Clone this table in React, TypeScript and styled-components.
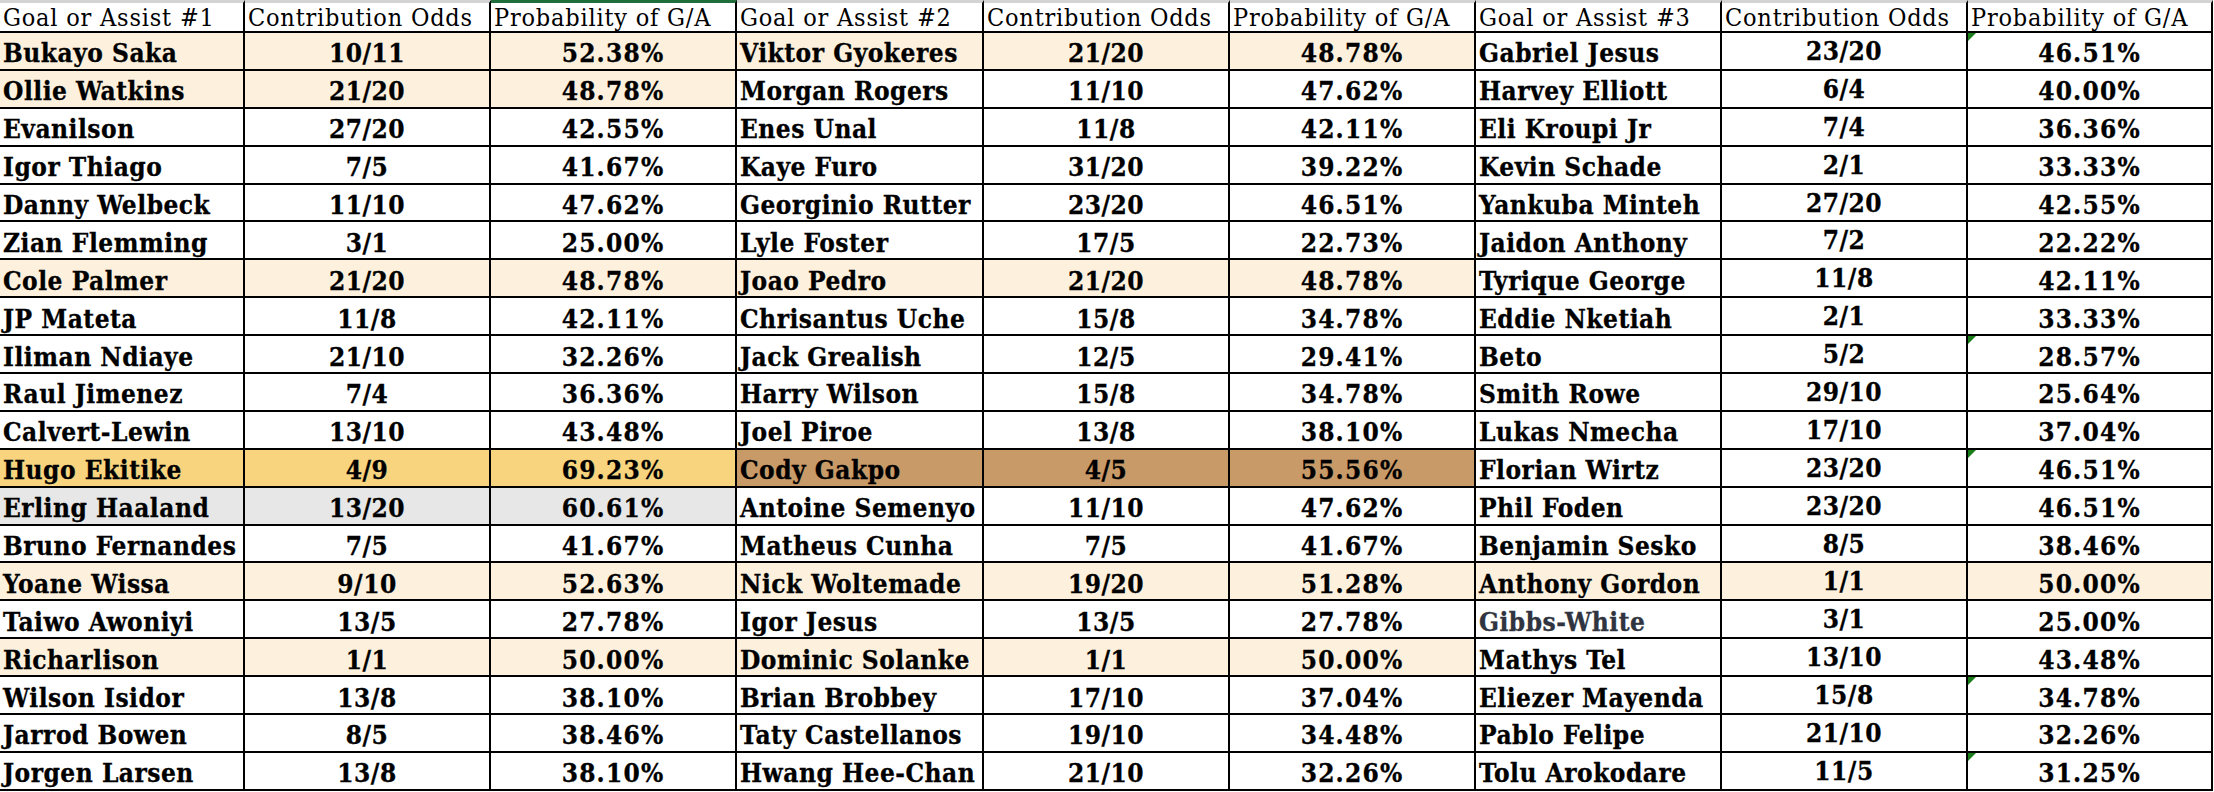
import React from 'react';
import styled, { createGlobalStyle } from 'styled-components';

type Tone = 'cream' | 'gold' | 'brown' | 'grey';

interface Entry {
    name: string
    odds: string
    prob: string
    tone?: Tone
    marker?: boolean
    muted?: boolean
}

const e = (name: string, odds: string, prob: string, extra: Partial<Entry> = {}): Entry =>
    ({ name, odds, prob, ...extra })

const groupOne: Entry[] = [
    e('Bukayo Saka', '10/11', '52.38%', { tone: 'cream' }),
    e('Ollie Watkins', '21/20', '48.78%', { tone: 'cream' }),
    e('Evanilson', '27/20', '42.55%'),
    e('Igor Thiago', '7/5', '41.67%'),
    e('Danny Welbeck', '11/10', '47.62%'),
    e('Zian Flemming', '3/1', '25.00%'),
    e('Cole Palmer', '21/20', '48.78%', { tone: 'cream' }),
    e('JP Mateta', '11/8', '42.11%'),
    e('Iliman Ndiaye', '21/10', '32.26%'),
    e('Raul Jimenez', '7/4', '36.36%'),
    e('Calvert-Lewin', '13/10', '43.48%'),
    e('Hugo Ekitike', '4/9', '69.23%', { tone: 'gold' }),
    e('Erling Haaland', '13/20', '60.61%', { tone: 'grey' }),
    e('Bruno Fernandes', '7/5', '41.67%'),
    e('Yoane Wissa', '9/10', '52.63%', { tone: 'cream' }),
    e('Taiwo Awoniyi', '13/5', '27.78%'),
    e('Richarlison', '1/1', '50.00%', { tone: 'cream' }),
    e('Wilson Isidor', '13/8', '38.10%'),
    e('Jarrod Bowen', '8/5', '38.46%'),
    e('Jorgen Larsen', '13/8', '38.10%'),
]

const groupTwo: Entry[] = [
    e('Viktor Gyokeres', '21/20', '48.78%', { tone: 'cream' }),
    e('Morgan Rogers', '11/10', '47.62%'),
    e('Enes Unal', '11/8', '42.11%'),
    e('Kaye Furo', '31/20', '39.22%'),
    e('Georginio Rutter', '23/20', '46.51%'),
    e('Lyle Foster', '17/5', '22.73%'),
    e('Joao Pedro', '21/20', '48.78%', { tone: 'cream' }),
    e('Chrisantus Uche', '15/8', '34.78%'),
    e('Jack Grealish', '12/5', '29.41%'),
    e('Harry Wilson', '15/8', '34.78%'),
    e('Joel Piroe', '13/8', '38.10%'),
    e('Cody Gakpo', '4/5', '55.56%', { tone: 'brown' }),
    e('Antoine Semenyo', '11/10', '47.62%'),
    e('Matheus Cunha', '7/5', '41.67%'),
    e('Nick Woltemade', '19/20', '51.28%', { tone: 'cream' }),
    e('Igor Jesus', '13/5', '27.78%'),
    e('Dominic Solanke', '1/1', '50.00%', { tone: 'cream' }),
    e('Brian Brobbey', '17/10', '37.04%'),
    e('Taty Castellanos', '19/10', '34.48%'),
    e('Hwang Hee-Chan', '21/10', '32.26%'),
]

const groupThree: Entry[] = [
    e('Gabriel Jesus', '23/20', '46.51%', { marker: true }),
    e('Harvey Elliott', '6/4', '40.00%'),
    e('Eli Kroupi Jr', '7/4', '36.36%'),
    e('Kevin Schade', '2/1', '33.33%'),
    e('Yankuba Minteh', '27/20', '42.55%'),
    e('Jaidon Anthony', '7/2', '22.22%'),
    e('Tyrique George', '11/8', '42.11%'),
    e('Eddie Nketiah', '2/1', '33.33%'),
    e('Beto', '5/2', '28.57%', { marker: true }),
    e('Smith Rowe', '29/10', '25.64%'),
    e('Lukas Nmecha', '17/10', '37.04%'),
    e('Florian Wirtz', '23/20', '46.51%', { marker: true }),
    e('Phil Foden', '23/20', '46.51%'),
    e('Benjamin Sesko', '8/5', '38.46%'),
    e('Anthony Gordon', '1/1', '50.00%', { tone: 'cream' }),
    e('Gibbs-White', '3/1', '25.00%', { muted: true }),
    e('Mathys Tel', '13/10', '43.48%'),
    e('Eliezer Mayenda', '15/8', '34.78%', { marker: true }),
    e('Pablo Felipe', '21/10', '32.26%'),
    e('Tolu Arokodare', '11/5', '31.25%', { marker: true }),
]

const groups = [groupOne, groupTwo, groupThree]

const tones: Record<Tone, string> = {
    cream: '#fdf1dd',
    gold: '#f8d47e',
    brown: '#c89a68',
    grey: '#e7e7e7',
}

const GlobalStyle = createGlobalStyle`
    html, body {
        margin: 0;
        padding: 0;
        background: #ffffff;
    }
`

const Sheet = styled.div`
    display: grid;
    grid-template-columns: 245px 246px 246px 247px 246px 246px 246px 246px 245px;
    grid-template-rows: 33px repeat(20, 37.9px);
    width: 2213px;
    font-family: "DejaVu Serif Condensed", "DejaVu Serif", "Liberation Serif", serif;
    color: #000;
`

const HeadCell = styled.div<{ $selected?: boolean }>`
    box-sizing: border-box;
    display: flex;
    align-items: center;
    padding: 0 0 0 3px;
    border-top: 3px solid ${p => (p.$selected ? '#1f6e3c' : '#d3d3d3')};
    border-right: 2px solid #000;
    border-bottom: 2px solid #000;
    font-size: 25px;
    font-weight: 400;
    letter-spacing: 0.8px;
    white-space: nowrap;
    overflow: hidden;
`

const Cell = styled.div<{ $tone?: Tone; $center?: boolean; $lift?: boolean; $muted?: boolean; $wide?: boolean }>`
    position: relative;
    box-sizing: border-box;
    display: flex;
    align-items: center;
    justify-content: ${p => (p.$center ? 'center' : 'flex-start')};
    padding: ${p => (p.$lift ? '0' : '5px')} 0 0 ${p => (p.$center ? '0' : '3px')};
    background: ${p => (p.$tone ? tones[p.$tone] : '#ffffff')};
    border-right: 2px solid #000;
    border-bottom: 2px solid #000;
    font-size: 26px;
    font-weight: 700;
    letter-spacing: ${p => (p.$wide ? '1.2px' : '0.5px')};
    color: ${p => (p.$muted ? '#2f3440' : '#000')};
    -webkit-text-stroke: 0.3px ${p => (p.$muted ? '#2f3440' : '#000')};
    white-space: nowrap;
    overflow: hidden;
`

const Marker = styled.span`
    position: absolute;
    top: 0;
    left: 0;
    width: 0;
    height: 0;
    border-top: 8px solid #1a7f1a;
    border-right: 8px solid transparent;
`

const headers = ['Goal or Assist #1', 'Contribution Odds', 'Probability of G/A',
    'Goal or Assist #2', 'Contribution Odds', 'Probability of G/A',
    'Goal or Assist #3', 'Contribution Odds', 'Probability of G/A']

const App: React.FC<{}> = () => {
    const rows = groupOne.map((_, i) => groups.map(g => g[i]))

    return (
        <>
            <GlobalStyle />
            <Sheet>
                {headers.map((h, i) => (
                    <HeadCell key={'h' + i} $selected={i === 2}>{h}</HeadCell>
                ))}
                {rows.map((row, r) =>
                    row.map((item, g) => (
                        <React.Fragment key={r + '-' + g}>
                            <Cell $tone={item.tone} $muted={item.muted}>{item.name}</Cell>
                            <Cell $tone={item.tone} $center $lift={g === 2}>{item.odds}</Cell>
                            <Cell $tone={item.tone} $center $wide>
                                {item.marker && <Marker />}
                                {item.prob}
                            </Cell>
                        </React.Fragment>
                    ))
                )}
            </Sheet>
        </>
    )
}

export default App
